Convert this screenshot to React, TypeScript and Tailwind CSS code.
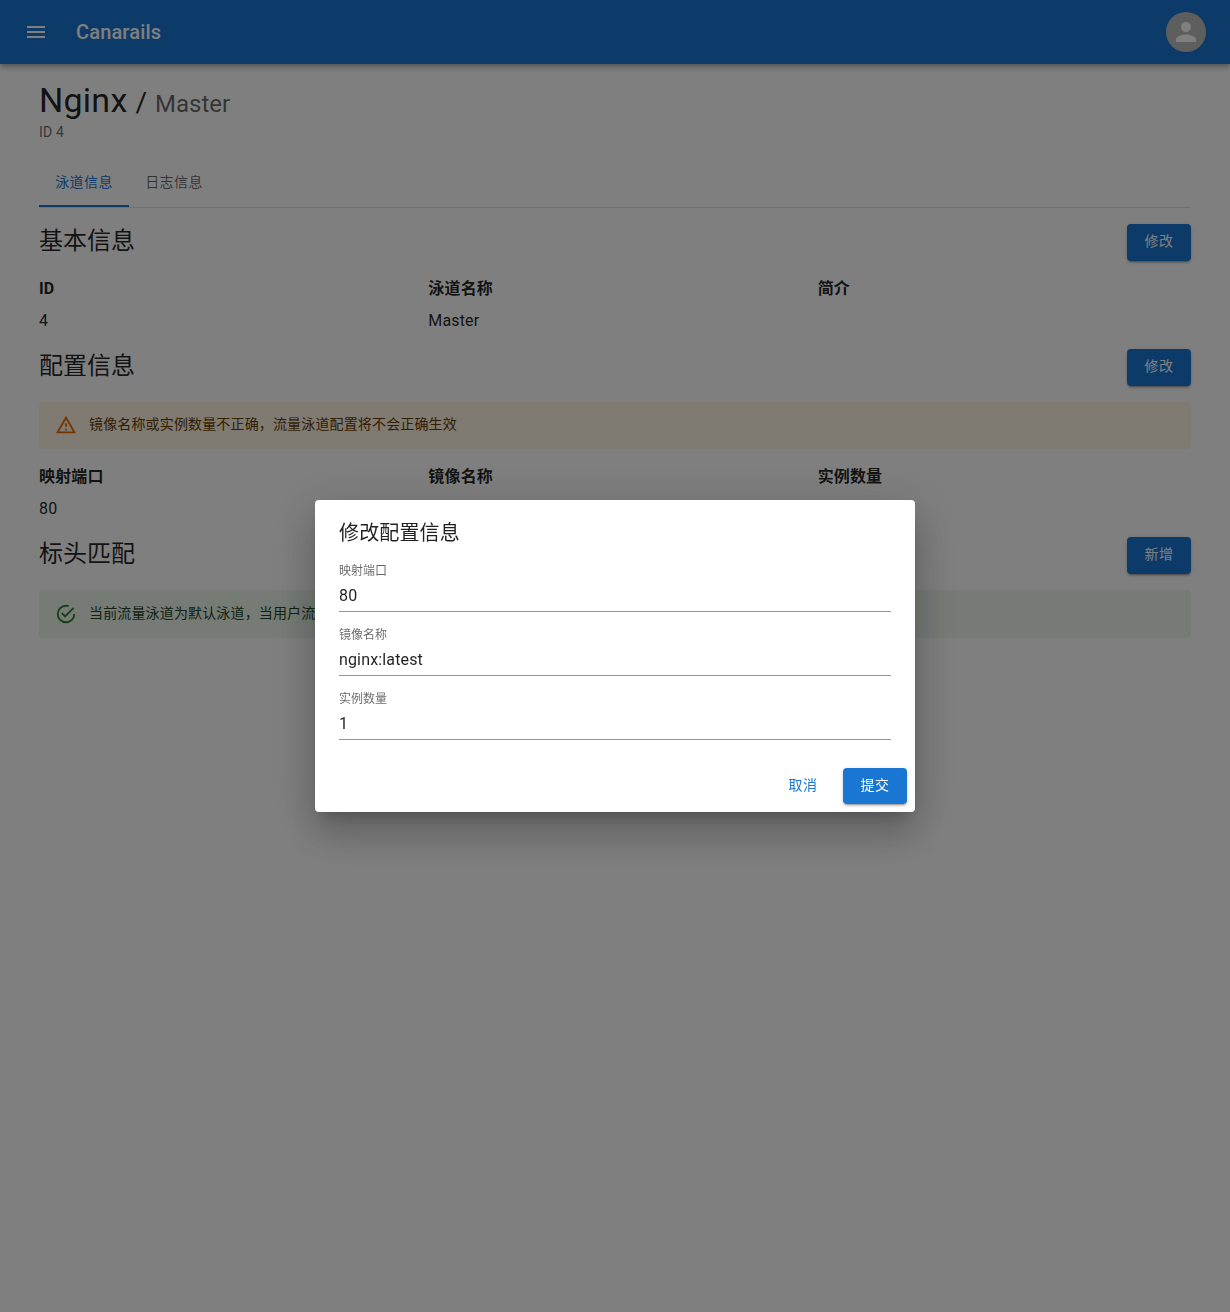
const FONT = "font-['Roboto','Noto_Sans_CJK_SC',sans-serif]";

const BUTTON_SHADOW =
  "shadow-[0_3px_1px_-2px_rgba(0,0,0,0.2),0_2px_2px_0_rgba(0,0,0,0.14),0_1px_5px_0_rgba(0,0,0,0.12)]";

function Icon({ d, className }: { d: string; className: string }) {
  return (
    <svg viewBox="0 0 24 24" fill="currentColor" className={className}>
      <path d={d} />
    </svg>
  );
}

function ActionButton({ label }: { label: string }) {
  return (
    <button
      className={`h-[37px] w-16 rounded bg-[#1976d2] pb-1 text-sm tracking-[0.4px] text-white ${BUTTON_SHADOW}`}
    >
      {label}
    </button>
  );
}

function SectionHeader({ title, action }: { title: string; action: string }) {
  return (
    <div className="flex items-start justify-between">
      <h2 className="pt-px text-2xl leading-8 text-black/87">{title}</h2>
      <ActionButton label={action} />
    </div>
  );
}

function InfoGrid({ rows }: { rows: { label: string; value: string }[] }) {
  return (
    <div className="grid grid-cols-3 gap-x-4">
      {rows.map((row) => (
        <div key={row.label}>
          <div className="pt-4 pb-1 text-base leading-6 font-bold tracking-[0.15px] text-black/87">
            {row.label}
          </div>
          <div className="h-[31px] pt-1 text-base leading-6 tracking-[0.15px] text-black/87">
            {row.value}
          </div>
        </div>
      ))}
    </div>
  );
}

function Field({ label, value }: { label: string; value: string }) {
  return (
    <label className="block">
      <div className="h-4 text-xs leading-4 text-black/60">{label}</div>
      <input
        readOnly
        defaultValue={value}
        className="mt-1 h-[29px] w-full border-b border-black/42 pb-1 text-base tracking-[0.15px] text-black/87 outline-none"
      />
    </label>
  );
}

export default function App() {
  return (
    <div className={`min-h-[1312px] bg-white ${FONT}`}>
      <header className="flex h-16 items-center justify-between bg-[#1976d2] px-6 text-white shadow-[0_2px_4px_-1px_rgba(0,0,0,0.2),0_4px_5px_0_rgba(0,0,0,0.14),0_1px_10px_0_rgba(0,0,0,0.12)]">
        <div className="flex items-center gap-7">
          <Icon d="M3 18h18v-2H3v2zm0-5h18v-2H3v2zm0-7v2h18V6H3z" className="size-6" />
          <span className="text-xl font-medium tracking-[0.15px]">Canarails</span>
        </div>
        <div className="flex size-10 items-center justify-center rounded-full bg-[#bdbdbd]">
          <Icon
            d="M12 12c2.21 0 4-1.79 4-4s-1.79-4-4-4-4 1.79-4 4 1.79 4 4 4zm0 2c-2.67 0-8 1.34-8 4v2h16v-2c0-2.66-5.33-4-8-4z"
            className="size-[30px]"
          />
        </div>
      </header>

      <main className="px-[39px]">
        <div className="pt-4">
          <div className="flex h-[42px] items-baseline text-black/87">
            <span className="text-[34px] leading-10 tracking-[0.25px]">Nginx</span>
            <span className="ml-2 text-[28px]">/</span>
            <span className="ml-2 text-2xl text-black/60">Master</span>
          </div>
          <div className="text-sm leading-5 tracking-[0.15px] text-black/60">ID 4</div>
        </div>

        <nav className="mt-[17px] flex border-b border-black/12">
          <div className="flex h-12 w-[90px] items-center justify-center border-b-2 border-[#1976d2] text-sm tracking-[0.4px] text-[#1976d2]">
            泳道信息
          </div>
          <div className="flex h-12 w-[90px] items-center justify-center border-b-2 border-transparent text-sm tracking-[0.4px] text-black/60">
            日志信息
          </div>
        </nav>

        <section className="mt-4">
          <SectionHeader title="基本信息" action="修改" />
          <InfoGrid
            rows={[
              { label: "ID", value: "4" },
              { label: "泳道名称", value: "Master" },
              { label: "简介", value: "" },
            ]}
          />
        </section>

        <section className="mt-[13px]">
          <SectionHeader title="配置信息" action="修改" />
          <div className="mt-4 flex h-[47px] items-center rounded bg-[#fff4e5] px-4 text-sm tracking-[0.15px] text-[#663c00]">
            <Icon
              d="M12 5.99L19.53 19H4.47L12 5.99M12 2L1 21h22L12 2zm1 14h-2v2h2v-2zm0-6h-2v4h2v-4z"
              className="mr-3 mb-0.5 size-[22px] text-[#ed6c02]"
            />
            <span className="pb-1">镜像名称或实例数量不正确，流量泳道配置将不会正确生效</span>
          </div>
          <InfoGrid
            rows={[
              { label: "映射端口", value: "80" },
              { label: "镜像名称", value: "nginx:latest" },
              { label: "实例数量", value: "1" },
            ]}
          />
        </section>

        <section className="mt-[13px]">
          <SectionHeader title="标头匹配" action="新增" />
          <div className="mt-4 flex h-12 items-center rounded bg-[#edf7ed] px-4 text-sm tracking-[0.15px] text-[#1e4620]">
            <Icon
              d="M20,12A8,8 0 0,1 12,20A8,8 0 0,1 4,12A8,8 0 0,1 12,4C12.76,4 13.5,4.11 14.2,4.31L15.77,2.74C14.61,2.26 13.34,2 12,2A10,10 0 0,0 2,12A10,10 0 0,0 12,22A10,10 0 0,0 22,12M7.91,10.08L6.5,11.5L11,16L21,6L19.59,4.58L11,13.17L7.91,10.08Z"
              className="mr-3 size-[22px] text-[#2e7d32]"
            />
            <span className="pb-0.5">当前流量泳道为默认泳道，当用户流量未匹配任何标头时将进入此泳道</span>
          </div>
        </section>
      </main>

      <div className="fixed inset-0 flex items-center justify-center bg-black/50">
        <div className="h-[312px] w-[600px] rounded bg-white shadow-[0_11px_15px_-7px_rgba(0,0,0,0.2),0_24px_38px_3px_rgba(0,0,0,0.14),0_9px_46px_8px_rgba(0,0,0,0.12)]">
          <h2 className="px-6 pt-[17px] pb-[14px] text-xl leading-8 tracking-[0.15px] text-black/87">
            修改配置信息
          </h2>
          <div className="flex flex-col gap-[15px] px-6">
            <Field label="映射端口" value="80" />
            <Field label="镜像名称" value="nginx:latest" />
            <Field label="实例数量" value="1" />
          </div>
          <div className="mt-7 flex items-center justify-end gap-2 pr-2">
            <button className="h-9 w-16 rounded pb-0.5 text-sm tracking-[0.4px] text-[#1976d2]">
              取消
            </button>
            <button
              className={`h-9 w-16 rounded bg-[#1976d2] pb-0.5 text-sm tracking-[0.4px] text-white ${BUTTON_SHADOW}`}
            >
              提交
            </button>
          </div>
        </div>
      </div>
    </div>
  );
}
